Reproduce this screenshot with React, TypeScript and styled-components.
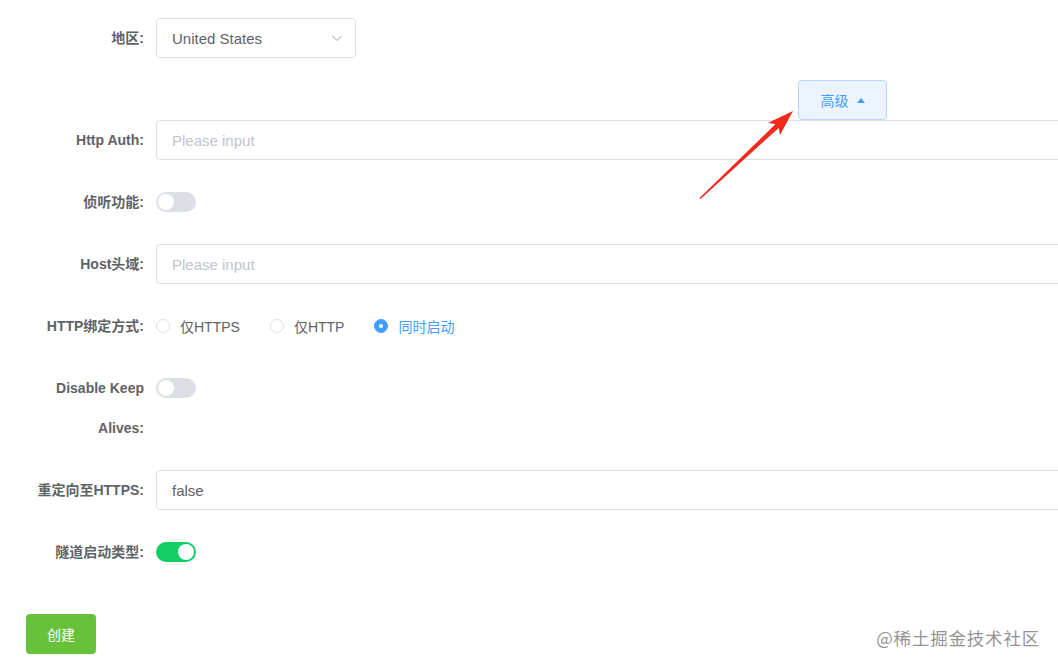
import React, { useState } from 'react';
import styled, { createGlobalStyle } from 'styled-components';

const GlobalStyle = createGlobalStyle`
  html, body {
    margin: 0;
    padding: 0;
    background: #ffffff;
    overflow: hidden;
  }
  body {
    font-family: "Liberation Sans", "Noto Sans CJK SC", sans-serif;
    font-size: 14px;
    color: #606266;
  }
`;

const Page = styled.div`
  position: relative;
  width: 1058px;
  height: 669px;
  overflow: hidden;
`;

const Form = styled.form`
  width: 1120px;
  padding: 18px 0 0 24px;
  display: flex;
  flex-direction: column;
`;

const Row = styled.div<{ $gap?: number }>`
  display: flex;
  align-items: flex-start;
  margin-bottom: ${({ $gap }) => ($gap ?? 22)}px;
`;

const Label = styled.label`
  width: 132px;
  flex-shrink: 0;
  box-sizing: border-box;
  padding-right: 12px;
  text-align: right;
  font-weight: bold;
  font-size: 14px;
  line-height: 40px;
  color: #606266;
`;

const Control = styled.div`
  flex: 1;
  min-height: 40px;
  display: flex;
  align-items: center;
`;

const SelectBox = styled.div`
  width: 200px;
  height: 40px;
  box-sizing: border-box;
  border: 1px solid #dcdfe6;
  border-radius: 4px;
  display: flex;
  align-items: center;
  justify-content: space-between;
  padding: 0 12px 0 15px;
  color: #606266;
  font-size: 15px;
`;

const Input = styled.input`
  width: 100%;
  height: 40px;
  box-sizing: border-box;
  border: 1px solid #dcdfe6;
  border-radius: 4px;
  padding: 0 15px;
  font-family: inherit;
  font-size: 15px;
  color: #606266;
  outline: none;
  &::placeholder {
    color: #c0c4cc;
  }
`;

const SwitchTrack = styled.span<{ $on: boolean }>`
  position: relative;
  display: inline-block;
  width: 40px;
  height: 20px;
  border-radius: 10px;
  background: ${({ $on }) => ($on ? '#13ce66' : '#dcdfe6')};
  cursor: pointer;
  &::after {
    content: '';
    position: absolute;
    top: 2px;
    left: ${({ $on }) => ($on ? '22px' : '2px')};
    width: 16px;
    height: 16px;
    border-radius: 50%;
    background: #fff;
  }
`;

const RadioGroup = styled.div`
  display: flex;
  align-items: center;
`;

const RadioItem = styled.label<{ $checked: boolean }>`
  display: flex;
  align-items: center;
  margin-right: 30px;
  cursor: pointer;
  color: ${({ $checked }) => ($checked ? '#409eff' : '#606266')};
  font-size: 14px;
`;

const RadioDot = styled.span<{ $checked: boolean }>`
  width: 14px;
  height: 14px;
  box-sizing: border-box;
  border-radius: 50%;
  border: 1px solid ${({ $checked }) => ($checked ? '#409eff' : '#dcdfe6')};
  background: ${({ $checked }) => ($checked ? '#409eff' : '#fff')};
  margin-right: 10px;
  display: flex;
  align-items: center;
  justify-content: center;
  &::after {
    content: '';
    width: 4px;
    height: 4px;
    border-radius: 50%;
    background: #fff;
  }
`;

const AdvancedRow = styled.div`
  height: 40px;
  padding-left: 774px;
`;

const AdvancedButton = styled.button`
  height: 40px;
  width: 89px;
  box-sizing: border-box;
  border: 1px solid #b3d8ff;
  border-radius: 4px;
  background: #ecf5ff;
  color: #409eff;
  font-family: inherit;
  font-size: 14px;
  display: flex;
  align-items: center;
  justify-content: center;
  gap: 8px;
  cursor: pointer;
`;

const Caret = styled.span`
  width: 0;
  height: 0;
  border-left: 4px solid transparent;
  border-right: 4px solid transparent;
  border-bottom: 5px solid #409eff;
`;

const SubmitButton = styled.button`
  margin: 42px 0 0 2px;
  width: 70px;
  height: 40px;
  border: none;
  border-radius: 4px;
  background: #67c23a;
  color: #fff;
  font-family: inherit;
  font-size: 14px;
  cursor: pointer;
`;

const Overlay = styled.svg`
  position: absolute;
  top: 0;
  left: 0;
  pointer-events: none;
`;

const Watermark = styled.div`
  position: absolute;
  right: 18px;
  bottom: 19px;
  font-family: "Noto Sans CJK SC", sans-serif;
  font-size: 17.5px;
  color: rgba(110, 110, 110, 0.75);
  letter-spacing: 0.8px;
`;

const modes = ['仅HTTPS', '仅HTTP', '同时启动'];

export default function App() {
  const [mode, setMode] = useState(2);
  const [listen, setListen] = useState(false);
  const [keepAlive, setKeepAlive] = useState(false);
  const [tunnel, setTunnel] = useState(true);

  return (
    <Page>
      <GlobalStyle />
      <Form onSubmit={e => e.preventDefault()}>
        <Row $gap={22}>
          <Label>地区:</Label>
          <Control>
            <SelectBox>
              <span>United States</span>
              <svg width="12" height="12" viewBox="0 0 12 12">
                <path d="M1.5 4 L6 8.5 L10.5 4" fill="none" stroke="#c0c4cc" strokeWidth="1.1" />
              </svg>
            </SelectBox>
          </Control>
        </Row>
        <AdvancedRow>
          <AdvancedButton type="button">
            高级 <Caret />
          </AdvancedButton>
        </AdvancedRow>
        <Row>
          <Label>Http Auth:</Label>
          <Control>
            <Input placeholder="Please input" />
          </Control>
        </Row>
        <Row>
          <Label>侦听功能:</Label>
          <Control>
            <SwitchTrack $on={listen} onClick={() => setListen(!listen)} />
          </Control>
        </Row>
        <Row>
          <Label>Host头域:</Label>
          <Control>
            <Input placeholder="Please input" />
          </Control>
        </Row>
        <Row>
          <Label>HTTP绑定方式:</Label>
          <Control>
            <RadioGroup>
              {modes.map((m, i) => (
                <RadioItem key={m} $checked={mode === i} onClick={() => setMode(i)}>
                  <RadioDot $checked={mode === i} />
                  {m}
                </RadioItem>
              ))}
            </RadioGroup>
          </Control>
        </Row>
        <Row>
          <Label>Disable Keep Alives:</Label>
          <Control>
            <SwitchTrack $on={keepAlive} onClick={() => setKeepAlive(!keepAlive)} />
          </Control>
        </Row>
        <Row>
          <Label>重定向至HTTPS:</Label>
          <Control>
            <Input defaultValue="false" />
          </Control>
        </Row>
        <Row $gap={0}>
          <Label>隧道启动类型:</Label>
          <Control>
            <SwitchTrack $on={tunnel} onClick={() => setTunnel(!tunnel)} />
          </Control>
        </Row>
        <div>
          <SubmitButton type="submit">创建</SubmitButton>
        </div>
      </Form>
      <Overlay width="1058" height="669" viewBox="0 0 1058 669">
        <polygon
          points="700.5,199 778.7,127.9 780,135 793,111 768.3,122.8 775.3,124.3 699.5,198"
          fill="#f2291b"
        />
      </Overlay>
      <Watermark>@稀土掘金技术社区</Watermark>
    </Page>
  );
}
